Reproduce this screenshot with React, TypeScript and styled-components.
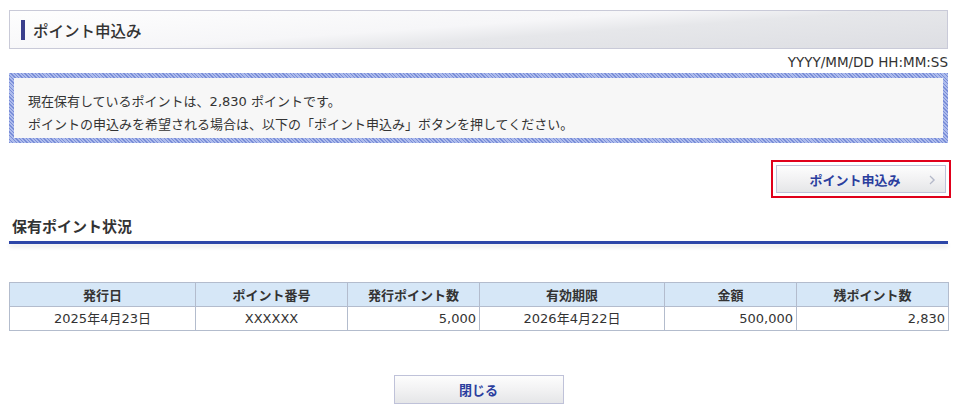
import React from 'react';
import styled, { createGlobalStyle } from 'styled-components';

const GlobalStyle = createGlobalStyle`
  body {
    margin: 0;
    background: #ffffff;
    font-family: "DejaVu Sans", "Noto Sans CJK JP", sans-serif;
    color: #333333;
  }
`;

const rows = [
  {
    issued: '2025年4月23日',
    number: 'XXXXXX',
    points: '5,000',
    expires: '2026年4月22日',
    amount: '500,000',
    remaining: '2,830',
  },
];

const columns = [
  { label: '発行日', width: 186 },
  { label: 'ポイント番号', width: 152 },
  { label: '発行ポイント数', width: 132 },
  { label: '有効期限', width: 185 },
  { label: '金額', width: 132 },
  { label: '残ポイント数', width: 152 },
];

const Chevron = () => (
  <svg width="8" height="10" viewBox="0 0 8 10">
    <polyline points="1,1 5,5 1,9" fill="none" stroke="#b4b8c8" strokeWidth="1.2" />
    <polyline points="3,2 6,5 3,8" fill="none" stroke="#d0d3de" strokeWidth="1" />
  </svg>
);

export default function App() {
  return (
    <Page>
      <GlobalStyle />
      <PageHeader>
        <HeaderBar />
        <HeaderTitle>ポイント申込み</HeaderTitle>
      </PageHeader>
      <Timestamp>YYYY/MM/DD HH:MM:SS</Timestamp>

      <Notice>
        <NoticeInner>
          <NoticeLine>現在保有しているポイントは、2,830 ポイントです。</NoticeLine>
          <NoticeLine>ポイントの申込みを希望される場合は、以下の「ポイント申込み」ボタンを押してください。</NoticeLine>
        </NoticeInner>
      </Notice>

      <ActionRow>
        <Focus>
          <ApplyButton>
            <span>ポイント申込み</span>
            <ArrowSlot>
              <Chevron />
            </ArrowSlot>
          </ApplyButton>
        </Focus>
      </ActionRow>

      <SectionTitle>保有ポイント状況</SectionTitle>
      <SectionRule />

      <Table>
        <colgroup>
          {columns.map((c) => (
            <col key={c.label} style={{ width: c.width }} />
          ))}
        </colgroup>
        <thead>
          <tr>
            {columns.map((c) => (
              <Th key={c.label}>{c.label}</Th>
            ))}
          </tr>
        </thead>
        <tbody>
          {rows.map((r) => (
            <tr key={r.number}>
              <Td>{r.issued}</Td>
              <Td>{r.number}</Td>
              <Td $align="right">{r.points}</Td>
              <Td>{r.expires}</Td>
              <Td $align="right">{r.amount}</Td>
              <Td $align="right">{r.remaining}</Td>
            </tr>
          ))}
        </tbody>
      </Table>

      <Footer>
        <CloseButton>閉じる</CloseButton>
      </Footer>
    </Page>
  );
}

const Page = styled.div`
  padding: 10px 11px 0 9px;
`;

const PageHeader = styled.div`
  height: 37px;
  border: 1px solid #c9cad8;
  background: linear-gradient(176deg, #fefefe 0%, #f6f6f8 45%, #e6e7ea 60%, #dddee3 100%);
  display: flex;
  align-items: center;
`;

const HeaderBar = styled.div`
  width: 4px;
  height: 20px;
  margin-left: 11px;
  background: #3a3f8c;
`;

const HeaderTitle = styled.h1`
  margin: 0 0 0 8px;
  font-family: "Noto Sans CJK JP", sans-serif;
  font-size: 15.5px;
  font-weight: 500;
  color: #333333;
`;

const Timestamp = styled.div`
  text-align: right;
  font-size: 13.5px;
  color: #333333;
  margin-top: 5px;
  line-height: 16px;
`;

const Notice = styled.div`
  margin-top: 3px;
  padding: 5px;
  background: repeating-linear-gradient(45deg, #7a8ed8 0 1px, #aebcec 1px 2.5px);
`;

const NoticeInner = styled.div`
  background: #f7f7f7;
  height: 60px;
  box-sizing: border-box;
  padding: 12px 14px 0;
  font-size: 13px;
  color: #333333;
`;

const NoticeLine = styled.div`
  height: 23px;
  line-height: 23px;
  white-space: nowrap;
`;

const ActionRow = styled.div`
  display: flex;
  justify-content: flex-end;
  margin-top: 17px;
  margin-right: -3px;
`;

const Focus = styled.div`
  border: 2px solid #e0001b;
  padding: 3px;
`;

const buttonBase = `
  border: 1px solid #bfc2d9;
  background: linear-gradient(180deg, #fdfdfd 0%, #f2f2f3 50%, #e5e6e8 100%);
  font-family: "Noto Sans CJK JP", sans-serif;
  font-size: 13px;
  font-weight: 700;
  color: #2b3e9e;
  display: flex;
  align-items: center;
  justify-content: center;
  cursor: pointer;
`;

const ApplyButton = styled.button`
  ${buttonBase}
  width: 170px;
  height: 28px;
  position: relative;
  padding: 0 12px 0 0;
`;

const ArrowSlot = styled.span`
  position: absolute;
  right: 8px;
  top: 9px;
  display: flex;
`;

const SectionTitle = styled.h2`
  margin: 18px 0 0 3px;
  font-family: "Noto Sans CJK JP", sans-serif;
  font-size: 15px;
  font-weight: 700;
  color: #333333;
  line-height: 20px;
`;

const SectionRule = styled.div`
  margin-top: 5px;
  height: 3px;
  background: #2d46a8;
  box-shadow: 0 3px 4px rgba(0, 0, 0, 0.1);
`;

const Table = styled.table`
  margin-top: 38px;
  width: 100%;
  border-collapse: collapse;
  table-layout: fixed;
  font-size: 13px;
`;

const Th = styled.th`
  background: #d6e7f7;
  border: 1px solid #b3bccd;
  height: 23px;
  padding: 0 4px;
  font-family: "Noto Sans CJK JP", sans-serif;
  font-weight: 700;
  color: #333333;
  text-align: center;
  line-height: 16px;
`;

const Td = styled.td<{ $align?: 'right' | 'center' }>`
  border: 1px solid #b3bccd;
  height: 23px;
  padding: 0 3px;
  text-align: ${(p) => p.$align ?? 'center'};
  color: #333333;
  line-height: 16px;
`;

const Footer = styled.div`
  display: flex;
  justify-content: center;
  margin-top: 44px;
`;

const CloseButton = styled.button`
  ${buttonBase}
  width: 170px;
  height: 29px;
`;
